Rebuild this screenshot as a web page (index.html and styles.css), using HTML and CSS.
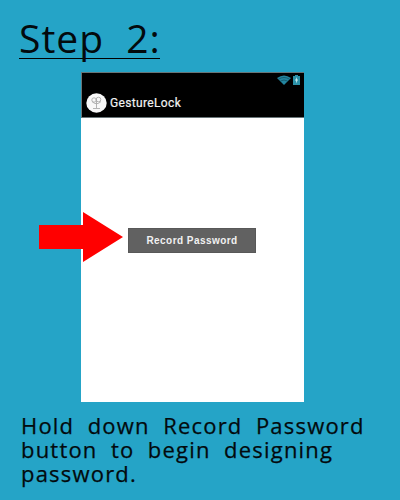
FILE: index.html
```html
<!DOCTYPE html>
<html lang="en">
<head>
<meta charset="utf-8">
<title>Step 2</title>
<link rel="stylesheet" href="styles.css">
</head>
<body>
<main class="page">
  <h1 class="title">Step 2:</h1>
  <section class="phone">
    <header class="top">
      <div class="status">
        <svg class="wifi" width="14" height="10" viewBox="0 0 14 10"><path d="M0 3Q7-2 14 3L7 10Z" fill="#23859f"/><path d="M1.5 4.2Q7 .8 12.500 4.200M3.500 6Q7 4 10.500 6" fill="none" stroke="#0d4353" stroke-width=".6"/></svg>
        <svg class="battery" width="7" height="10" viewBox="0 0 7 10"><path d="M2 0h3v1h2v9H0V1h2z" fill="#2c91a8"/><path d="M4 2L2 5.500h1.300L3 8.500l2-4H3.700z" fill="#d9f4f5"/></svg>
      </div>
      <div class="appbar">
        <svg class="logo" width="21" height="20" viewBox="0 0 21 20"><ellipse cx="10.500" cy="10" rx="10.200" ry="9.700" fill="#f8f8f8"/><g fill="none" stroke="#aaa" stroke-width=".9"><circle cx="8" cy="7" r="2.200"/><circle cx="12.500" cy="6.500" r="2.300"/><path d="M6 8.500Q10.500 13 15 8.500M10.500 6v9M7 15.500h7"/></g></svg>
        <span class="name">GestureLock</span>
      </div>
    </header>
    <div class="screen">
      <button class="record">Record Password</button>
      <svg class="arrow" width="84" height="50" viewBox="0 0 84 50"><path d="M0 13H44V0L84 25L44 50V37H0Z" fill="#f00"/></svg>
    </div>
  </section>
  <p class="caption"><span class="line">Hold down Record Password</span><span class="line">button to begin designing</span><span class="line">password.</span></p>
</main>
</body>
</html>
```
FILE: styles.css
```css
* { box-sizing: border-box; }
body { margin: 0; background: #25a4c7; }
.page {
  width: 400px;
  height: 500px;
  overflow: hidden;
  display: flex;
  flex-direction: column;
  font-family: "Open Sans", sans-serif;
  color: #030a0d;
}
.title {
  margin: 14px 0 0 19px;
  width: 141px;
  height: 45px;
  border-bottom: 1px solid #000;
  font-weight: 400;
  font-size: 39px;
  line-height: 47px;
  letter-spacing: 1px;
  word-spacing: 11px;
  white-space: nowrap;
}
.phone {
  margin: 13px 0 0 81px;
  width: 223px;
  height: 330px;
  background: #fff;
}
.top {
  height: 46px;
  background: #000;
  border: 1px solid #687578;
  border-right: 0;
  display: flex;
  flex-direction: column;
}
.status { display: flex; justify-content: flex-end; gap: 2px; padding: 2px 4px 0 0; height: 20px; }
.appbar { display: flex; align-items: center; gap: 3px; padding-left: 4px; height: 20px; }
.name { font: 400 12px/20px Roboto, sans-serif; letter-spacing: .35px; color: #f2f2f2; -webkit-text-stroke: .2px; }
.screen { position: relative; padding: 110px 0 0 47px; }
.record {
  display: block;
  width: 128px;
  height: 25px;
  padding: 0;
  border: 1px solid #585858;
  background: #616161;
  color: #f1f1f1;
  font: 700 10px/23px "Liberation Sans", sans-serif;
  letter-spacing: .45px;
}
.arrow { position: absolute; left: -42px; top: 94px; }
.caption { margin: 11px 0 0 21px; font-size: 22px; line-height: 24px; -webkit-text-stroke: .25px; }
.line { display: block; white-space: nowrap; letter-spacing: 1.200px; word-spacing: 6.500px; }
```
